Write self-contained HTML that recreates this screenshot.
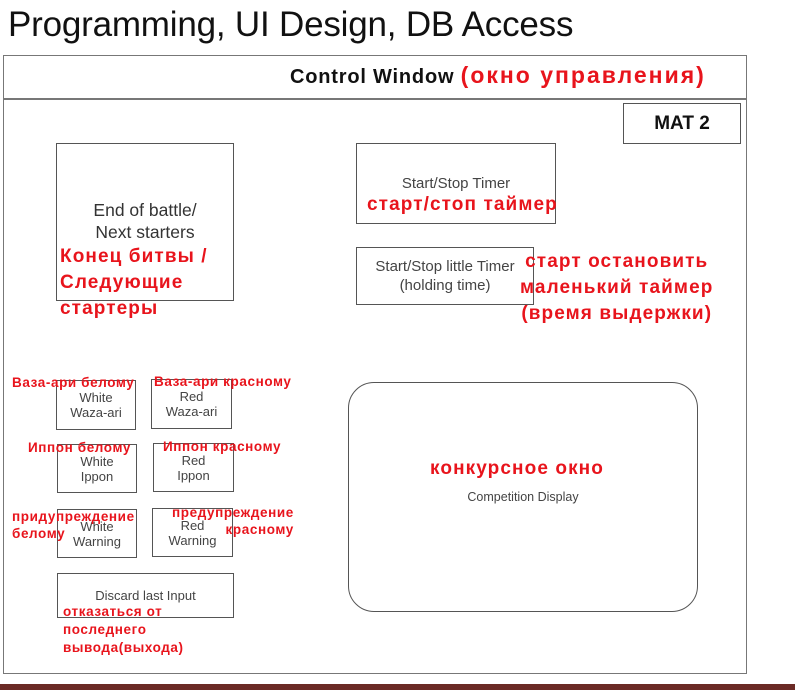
<!DOCTYPE html>
<html><head><meta charset="utf-8"><style>
body{margin:0;width:795px;height:690px;background:#fff;position:relative;overflow:hidden;font-family:"Liberation Sans","DejaVu Sans",sans-serif}
.a{position:absolute}
.b{position:absolute;border:1.5px solid #555;box-sizing:border-box;background:#fff}
.g{color:#444;font-size:13px;text-align:center;line-height:15px}
.r{position:absolute;color:#e8141c;font-weight:bold;white-space:nowrap}
.s{font-size:13.5px;line-height:15px;letter-spacing:0.6px}
.m{font-size:19px;line-height:26px;letter-spacing:1.1px}
</style></head><body>
<div class="a" style="left:8px;top:5px;font-size:35px;color:#111;letter-spacing:-0.2px">Programming, UI Design, DB Access</div>
<div class="b" style="left:3px;top:55px;width:744px;height:619px;border-color:#777"></div>
<div class="a" style="left:3px;top:98px;width:744px;height:1.5px;background:#777"></div>
<div class="a" style="left:290px;top:62px;font-size:20px;font-weight:bold;letter-spacing:0.8px;color:#111;white-space:nowrap">Control Window <span style="color:#e8141c;font-weight:bold;font-size:23px;letter-spacing:2px">(окно управления)</span></div>
<div class="b" style="left:623px;top:103px;width:118px;height:41px;font-weight:bold;font-size:19px;text-align:center;line-height:39px;color:#111">MAT 2</div>
<div class="b g" style="left:56px;top:143px;width:178px;height:158px;font-size:17.5px;line-height:22px;padding-top:55px;color:#333">End of battle/<br>Next starters</div>
<div class="b g" style="left:356px;top:143px;width:200px;height:81px;font-size:15px;padding-top:32px">Start/Stop Timer</div>
<div class="b g" style="left:356px;top:247px;width:178px;height:58px;font-size:15px;line-height:19px;padding-top:9px">Start/Stop little Timer<br>(holding time)</div>
<div class="b g" style="left:348px;top:382px;width:350px;height:230px;border-radius:26px;font-size:12.5px;padding-top:107px">Competition Display</div>
<div class="b g" style="left:56px;top:380px;width:80px;height:50px;padding-top:9px">White<br>Waza-ari</div>
<div class="b g" style="left:151px;top:379px;width:81px;height:50px;padding-top:9px">Red<br>Waza-ari</div>
<div class="b g" style="left:57px;top:444px;width:80px;height:49px;padding-top:9px">White<br>Ippon</div>
<div class="b g" style="left:153px;top:443px;width:81px;height:49px;padding-top:9px">Red<br>Ippon</div>
<div class="b g" style="left:57px;top:509px;width:80px;height:49px;padding-top:9px">White<br>Warning</div>
<div class="b g" style="left:152px;top:508px;width:81px;height:49px;padding-top:9px">Red<br>Warning</div>
<div class="b g" style="left:57px;top:573px;width:177px;height:45px;padding-top:14px">Discard last Input</div>
<div class="r m" style="left:60px;top:244px">Конец битвы /<br>Следующие<br>стартеры</div>
<div class="r m" style="left:367px;top:192px">старт/стоп таймер</div>
<div class="r m" style="left:520px;top:249px;text-align:center">старт остановить<br>маленький таймер<br>(время выдержки)</div>
<div class="r m" style="left:430px;top:456px">конкурсное окно</div>
<div class="r s" style="left:12px;top:375px">Ваза-ари белому</div>
<div class="r s" style="left:154px;top:374px">Ваза-ари красному</div>
<div class="r s" style="left:28px;top:440px">Иппон белому</div>
<div class="r s" style="left:163px;top:439px">Иппон красному</div>
<div class="r s" style="left:12px;top:508px;line-height:17px">придупреждение<br>белому</div>
<div class="r s" style="left:172px;top:504px;text-align:right;line-height:17px">предупреждение<br>красному</div>
<div class="r s" style="left:63px;top:603px;line-height:18px">отказаться от<br>последнего<br>вывода(выхода)</div>
<div class="a" style="left:0;top:684px;width:795px;height:6px;background:#6b2a26"></div>
</body></html>
